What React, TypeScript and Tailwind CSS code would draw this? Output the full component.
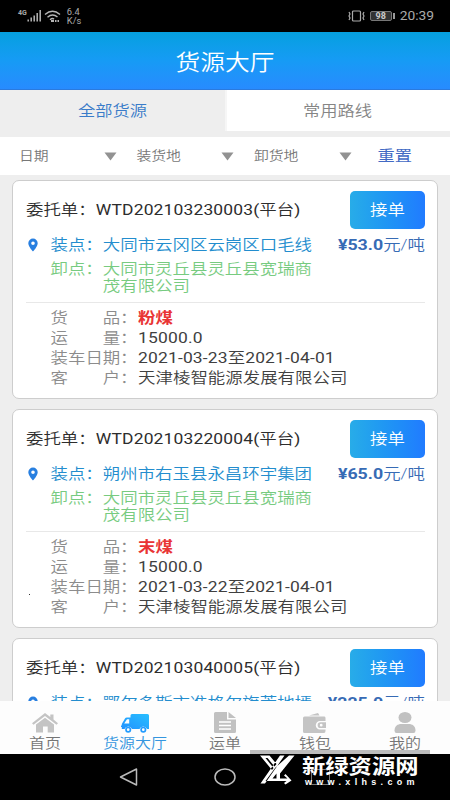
import React from "react";

const T = ({ children, className = "" }: { children: React.ReactNode; className?: string }) => (
  <span className={`inline-block scale-y-[0.87] whitespace-nowrap ${className}`}>{children}</span>
);

// Latin runs are set in a regular weight beside the lighter Chinese text.
const Mix = ({ text }: { text: string }) => (
  <>
    {text.split(/([\x20-\x7e]+)/).map((part, i) =>
      i % 2 === 1 ? <span key={i} className="font-normal tracking-[0.16px]">{part}</span> : part
    )}
  </>
);

const orders = [
  { no: "WTD202103230003", from: "大同市云冈区云岗区口毛线", price: "53.0", goods: "粉煤", date: "2021-03-23至2021-04-01" },
  { no: "WTD202103220004", from: "朔州市右玉县永昌环宇集团", price: "65.0", goods: "末煤", date: "2021-03-22至2021-04-01" },
  { no: "WTD202103040005", from: "鄂尔多斯市准格尔旗荒地墕", price: "225.0", goods: "粉煤", date: "2021-03-04至2021-04-01" },
];

function Row({ label, children }: { label: string; children: React.ReactNode }) {
  return (
    <div className="flex h-5 items-center">
      <div className="flex w-[69.6px] justify-between text-[#8c8c8c]">
        {label.split("").map((c) => (
          <T key={c}>{c}</T>
        ))}
      </div>
      <T className="w-[18px] text-[#8c8c8c]">：</T>
      <T className="text-[#404040]">{children}</T>
    </div>
  );
}

function Card({ o }: { o: (typeof orders)[number] }) {
  return (
    <div className="h-[219px] w-[426px] shrink-0 rounded-[7px] border border-[#cdcdcd] bg-white pl-[13px] pr-3 text-[17.450px] leading-5">
      <div className="flex h-[58px] items-center justify-between">
        <T className="text-[#2d2d2d]">
          委托单：<Mix text={`${o.no}(平台)`} />
        </T>
        <button className="flex h-[38px] w-[75px] items-center justify-center rounded-[5px] bg-linear-to-r from-[#28ace8] to-[#217bff] text-white">
          <T>接单</T>
        </button>
      </div>
      <div className="flex h-[11px] items-center">
        <svg className="ml-0.5 mr-[12.500px] shrink-0" width="10" height="14" viewBox="0 0 10 14">
          <path fillRule="evenodd" fill="#287fe0" d="M5 .5A4.7 4.7 0 0 0 .3 5.2C.3 8.5 5 13.5 5 13.5s4.700-5 4.700-8.300A4.700 4.700 0 0 0 5 .5zm0 3a1.800 1.800 0 1 1 0 3.600 1.800 1.800 0 0 1 0-3.600z" />
        </svg>
        <T className="text-[#238dce]">装点：{o.from}</T>
        <T className="ml-auto text-[#376bb5]">
          <span className="text-[17.800px] font-bold">¥{o.price}</span>元/吨
        </T>
      </div>
      <div className="mt-[11px] flex h-[34px] pl-[24.500px] leading-[17px] text-[#77cb80]">
        <T className="h-[17px]">卸点：</T>
        <div className="flex flex-col">
          <T>大同市灵丘县灵丘县宽瑞商</T>
          <T>茂有限公司</T>
        </div>
      </div>
      <div className="mt-[7px] h-px bg-[#e8e8e8]" />
      <div className="pl-[24.500px] pt-[5px]">
        <Row label="货品"><span className="font-bold text-[#e93535]">{o.goods}</span></Row>
        <Row label="运量"><Mix text="15000.0" /></Row>
        <Row label="装车日期"><Mix text={o.date} /></Row>
        <Row label="客户">天津棱智能源发展有限公司</Row>
      </div>
    </div>
  );
}

function Filter({ label }: { label: string }) {
  return (
    <div className="flex w-[117.500px] items-center justify-between pl-[19px] text-[14.800px] text-[#777]">
      <T>{label}</T>
      <svg className="mr-px" width="13" height="9" viewBox="0 0 13 9"><path d="M.5.5h12L6.500 8.500z" fill="#929292" /></svg>
    </div>
  );
}

const navs = [
  {
    label: "首页",
    icon: (
      <svg width="26" height="20" viewBox="0 0 26 20" fill="#c4c4c4">
        <path d="M13 0 0 10.200l1.500 1.500L13 2.900l11.500 8.800 1.500-1.500-4.500-3.600V1.500h-3.200v2.600z" />
        <path d="M4 11.500 13 4.800l9 6.700V19.500h-6.300v-6h-4.700v6H4z" />
      </svg>
    ),
  },
  {
    label: "货源大厅",
    icon: (
      <svg width="28" height="19" viewBox="0 0 28 19">
        <defs><linearGradient id="truck" x1="0" y1="1" x2="1" y2="0"><stop stopColor="#2292ff" /><stop offset="1" stopColor="#28bfff" /></linearGradient></defs>
        <path fill="url(#truck)" fillRule="evenodd" d="M11 0h15.500Q28 0 28 1.500V15h-2a4 4 0 0 0-7.500 0H11a4 4 0 0 0-7.500 0H.8V13H0v-1.500h.8V10L4 4.500Q4.500 3.500 6 3.500h3.500v-2Q9.500 0 11 0zM6 5.300 3.200 9.500h5V5.300z" />
        <circle cx="7.200" cy="15.700" r="2.200" fill="#fff" stroke="#249cff" strokeWidth="1.700" />
        <circle cx="22.300" cy="15.700" r="2.200" fill="#fff" stroke="#249cff" strokeWidth="1.700" />
      </svg>
    ),
  },
  {
    label: "运单",
    icon: (
      <svg width="22" height="21" viewBox="0 0 22 21">
        <path fill="#c1c1c1" d="M1.500 0H13v7.500h9V19.500Q22 21 20.500 21h-19Q0 21 0 19.500v-18Q0 0 1.500 0zM14.500 0 22 6h-7.500z" />
        <path d="M5 10h12M5 13.500h12M5 17h12" stroke="#fff" strokeWidth="1.300" />
      </svg>
    ),
  },
  {
    label: "钱包",
    icon: (
      <svg width="24" height="20" viewBox="0 0 24 20">
        <path fill="#c4c4c4" d="M6 2.500 15 0l1.500 2.500zM1.500 3.500h20Q22.500 3.500 22.500 5v3H17a4 4 0 0 0 0 8.500h5.500V18Q22.500 20 21 20H1.500Q0 20 0 18.500V5Q0 3.500 1.500 3.500z" />
        <path fill="#c4c4c4" fillRule="evenodd" d="M17.500 9.300H23V15h-5.500a2.850 2.850 0 0 1 0-5.700zm.7 1.500a1.400 1.400 0 1 0 0 2.800 1.400 1.400 0 0 0 0-2.800z" />
      </svg>
    ),
  },
  {
    label: "我的",
    icon: (
      <svg width="22" height="21" viewBox="0 0 22 21" fill="#c1c1c1">
        <ellipse cx="11" cy="5.500" rx="6.500" ry="5.500" />
        <path d="M.5 18.500C.5 14 4 12 7 12h8c3 0 6.500 2 6.500 6.500Q21.500 21 19.500 21h-17Q.5 21 .5 18.500z" />
      </svg>
    ),
  },
];

export default function App() {
  return (
    <div className="relative flex h-[800px] w-[450px] flex-col overflow-hidden bg-[#eee] font-['Roboto','Noto_Sans_CJK_SC',sans-serif] font-[350]">
      <div className="flex h-8 shrink-0 items-center bg-black pl-[18px] pr-4 text-[#aaa]">
        <span className="self-start pt-[10px] text-[7px] font-bold leading-[7px]">4G</span>
        <svg width="14" height="12" viewBox="0 0 14 12" stroke="#b5b5b5" strokeWidth="1.500"><path d="M1.200 9.500V11.500M4.200 7.500v4M7.200 5.500v6M10.200 3v8.500M13.200 0v11.500" /></svg>
        <svg className="ml-[3px]" width="17" height="13" viewBox="0 0 17 13" fill="none" stroke="#b5b5b5" strokeWidth="1.400"><path d="M1 4.500Q8.500-2 16 4.500M3.500 7.200Q8.500 3 13.500 7M6 9.700q2.500-2 4 -.5" /><path d="M7 11h3M11 11h1.500M13.500 11H15" strokeWidth="2" /></svg>
        <div className="ml-[6px] text-[9.300px] font-normal leading-[9.500px]"><div>6.4</div><div>K/s</div></div>
        <svg className="ml-auto" width="17" height="12" viewBox="0 0 17 12" fill="none" stroke="#aaa" strokeWidth="1.200"><rect x="4.500" y="1" width="8" height="10" rx="1" /><path d="M1 2l1 2-1 2 1 2-1 2M16 2l-1 2 1 2-1 2 1 2" /></svg>
        <div className="ml-[5px] flex h-[10px] w-[22px] items-center justify-center rounded-[2px] border border-[#777] bg-[#333] text-[9px] font-bold leading-none text-[#ccc]">98</div>
        <div className="ml-px h-1.5 w-0.5 bg-[#999]" />
        <span className="ml-[5px] text-[13.800px] font-normal"><T>20:39</T></span>
      </div>
      <header className="flex h-[58px] shrink-0 items-center justify-center border-b border-[#2b7ade] bg-linear-to-b from-[#05a0df] via-[#169bf5] to-[#278bff] pt-1 text-[24.700px] text-white">
        <T>货源大厅</T>
      </header>
      <div className="grid h-[47px] shrink-0 grid-cols-2 text-[17.300px] leading-[43px]">
        <div className="text-center text-[#3a7cc9]"><T>全部货源</T></div>
        <div className="h-[41px] border-l-2 border-[#f6f6f6] bg-white pr-[2px] text-center text-[#858585]"><T>常用路线</T></div>
      </div>
      <div className="flex h-[38px] shrink-0 items-center bg-white pt-px">
        <Filter label="日期" />
        <Filter label="装货地" />
        <Filter label="卸货地" />
        <T className="ml-[25px] text-[17.300px] font-normal text-[#4169c4]">重置</T>
      </div>
      <main className="flex h-[526px] shrink-0 flex-col gap-[10px] overflow-hidden pl-3 pt-[5px]">
        {orders.map((o) => <Card key={o.no} o={o} />)}
      </main>
      <nav className="grid h-[53px] shrink-0 grid-cols-5 bg-[#fdfdfd] text-[16px] leading-[18px]">
        {navs.map((n, i) => (
          <div key={n.label} className={i === 1 ? "flex flex-col items-center text-[#3496df]" : "flex flex-col items-center text-[#757575]"}>
            <div className="flex h-[34px] items-end pb-[2px]">{n.icon}</div>
            <T>{n.label}</T>
          </div>
        ))}
      </nav>
      <div className="flex h-[46px] shrink-0 items-center bg-black pl-[119px]">
        <svg width="19" height="18" viewBox="0 0 19 18" fill="none" stroke="#bbb" strokeWidth="1.500"><path d="M17.500 1v16L1.500 9z" strokeLinejoin="round" /></svg>
        <svg className="ml-[76px]" width="22" height="18" viewBox="0 0 22 18" fill="none" stroke="#bbb" strokeWidth="1.500"><ellipse cx="11" cy="9" rx="10" ry="8" /></svg>
        <div className="ml-[75px] h-4 w-[19px] border border-[#777]" />
      </div>
      <div className="absolute left-[29px] top-[594px] size-px bg-[#333]" />
      <div className="absolute left-[250px] top-[750px] h-1 w-[180px] bg-[#bcbcbc]" />
      <div className="absolute left-[260px] top-[755px] flex text-white">
        <svg width="35" height="30" viewBox="0 0 35 30">
          <path fill="#fff" d="M0 .5h9.500l7 8.500-2 2.500L7.500 3H5.500l8 10-1.500 2zM20 .5h4.500L5 28.500H.5zM29 .5h5.500L20 18.500v5h7.500l-3.500-3 1.500-1.500 6 6.500-6 4-1.500-1.500 2.500-2H5.500l10-13.500zM16.500 18.500 12.500 23.500h4z" fillRule="evenodd" />
        </svg>
        <div className="ml-[7px] font-['Noto_Sans_CJK_SC',sans-serif]">
          <div className="h-[22px] text-[23.300px] font-bold leading-[21px]"><T className="scale-y-[0.9]">新绿资源网</T></div>
          <div className="ml-[3px] font-['Liberation_Sans',sans-serif] text-[9px] font-bold leading-[10px] tracking-[4.300px]">www.xlhs.com</div>
        </div>
      </div>
    </div>
  );
}
